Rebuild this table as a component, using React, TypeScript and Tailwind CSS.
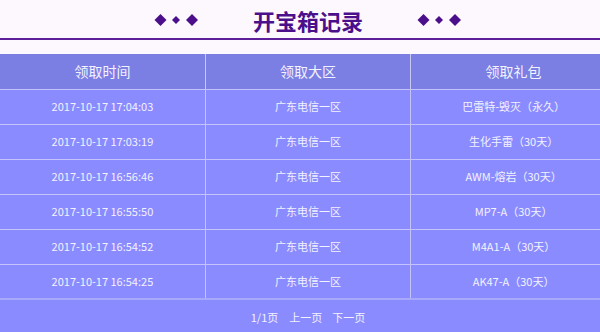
import React from 'react';

const records = [
  { time: '2017-10-17 17:04:03', zone: '广东电信一区', gift: '巴雷特-毁灭（永久）' },
  { time: '2017-10-17 17:03:19', zone: '广东电信一区', gift: '生化手雷（30天）' },
  { time: '2017-10-17 16:56:46', zone: '广东电信一区', gift: 'AWM-熔岩（30天）' },
  { time: '2017-10-17 16:55:50', zone: '广东电信一区', gift: 'MP7-A（30天）' },
  { time: '2017-10-17 16:54:52', zone: '广东电信一区', gift: 'M4A1-A（30天）' },
  { time: '2017-10-17 16:54:25', zone: '广东电信一区', gift: 'AK47-A（30天）' },
];

const font = { fontFamily: '"Microsoft YaHei", "Noto Sans CJK SC", "Noto Sans", sans-serif' };

const Diamonds = () => (
  <svg width="45" height="14" viewBox="0 0 45 14" className="block">
    <polygon points="6.5,1 12.5,7 6.5,13 0.5,7" fill="#4b0f8c" />
    <polygon points="22,3 26,7 22,11 18,7" fill="#4b0f8c" />
    <polygon points="38,1 44,7 38,13 32,7" fill="#4b0f8c" />
  </svg>
);

export default function App() {
  return (
    <div className="w-[600px] h-[332px] overflow-hidden bg-[#fdf8fd]" style={font}>
      <div className="w-[616px]">
        {/* Title */}
        <div className="h-[38px] flex items-center justify-center pt-[1px]">
          <Diamonds />
          <h1 className="mx-[54px] text-[22px] leading-none font-bold text-[#4b0f8c]">开宝箱记录</h1>
          <Diamonds />
        </div>
        <div className="h-[2px] bg-[#5b1f99]" />
        <div className="h-[14px]" />

        {/* Table */}
        <table className="w-full table-fixed border-collapse text-[#f3f2ff]">
          <thead>
            <tr className="h-[35px] bg-[#7b7ee3] text-[14px]">
              <th className="font-normal border-r border-[#c9c8f2]">领取时间</th>
              <th className="font-normal border-r border-[#c9c8f2]">领取大区</th>
              <th className="font-normal">领取礼包</th>
            </tr>
          </thead>
          <tbody className="bg-[#8a8bfe] text-[11px]">
            {records.map((r) => (
              <tr key={r.time} className="h-[35px] border-t border-[#c4c3fb]">
                <td className="text-center border-r border-[#c4c3fb]">{r.time}</td>
                <td className="text-center border-r border-[#c4c3fb]">{r.zone}</td>
                <td className="text-center">{r.gift}</td>
              </tr>
            ))}
            <tr className="h-[35px] border-t-2 border-[#a9a9fc]">
              <td colSpan={3} className="text-center">
                <span>1/1页</span>
                <span className="ml-[11px]">上一页</span>
                <span className="ml-[10px]">下一页</span>
              </td>
            </tr>
          </tbody>
        </table>
      </div>
    </div>
  );
}
